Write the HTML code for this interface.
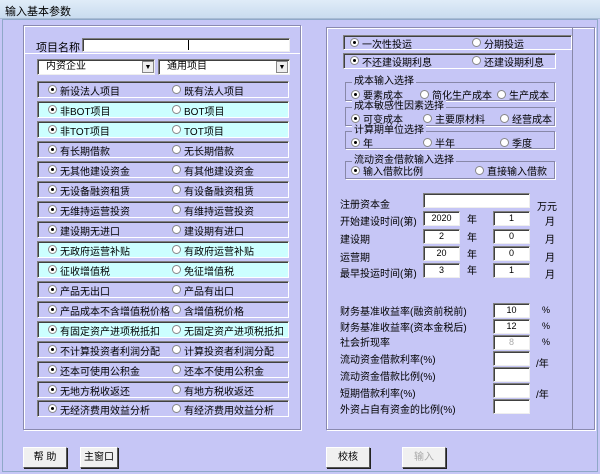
<!DOCTYPE html>
<html><head><meta charset="utf-8"><style>
*{margin:0;padding:0;box-sizing:border-box}
body{width:600px;height:474px;overflow:hidden;background:#c6c6f6;font-family:"Liberation Sans","Noto Sans CJK SC",sans-serif;font-size:10px;color:#000;position:relative}
.a{position:absolute;white-space:nowrap}
.title{left:0;top:0;width:600px;height:19px;background:linear-gradient(#e0ecf8,#c9dcef);border-bottom:1px solid #a8bcd4}
.frame{position:absolute;border:1px solid #8a8ab0;box-shadow:1px 1px 0 #fff inset,1px 1px 0 #fff}
.row{position:absolute;left:37px;width:252px;height:17px;border:1px solid #808080;border-right-color:#fff;border-bottom-color:#fff;box-shadow:inset 1px 1px 0 #404040}
.cy{background:#ccffff}
.r{position:absolute;top:3px;width:9px;height:9px;border-radius:50%;background:#fff;border:1px solid #888}
.r.on::after{content:"";position:absolute;left:2px;top:2px;width:3px;height:3px;border-radius:50%;background:#000}
.t{position:absolute;top:1px}
.in{position:absolute;background:#fff;border:1px solid #808080;border-right-color:#eee;border-bottom-color:#eee;box-shadow:inset 1px 1px 0 #404040;text-align:center;font-size:9px;line-height:13px}
.btn{position:absolute;height:21px;background:#f0f0f0;border:1px solid #fff;border-right-color:#555;border-bottom-color:#555;box-shadow:1px 1px 0 #222;text-align:center;line-height:19px}
.gb{position:absolute;border:1px solid #8888a8;box-shadow:1px 1px 0 #fff}
.gl{position:absolute;top:-8px;left:6px;background:#c6c6f6;padding:0 2px;line-height:13px}
</style></head><body>
<div class="a title"></div>
<div class="a" style="left:5px;top:3px;font-size:11px">输入基本参数</div>
<div class="a" style="left:2px;top:19px;width:596px;height:453px;border:1px solid #8fa8c8"></div>

<div class="frame" style="left:23px;top:25px;width:278px;height:405px"></div>
<div class="a" style="left:36px;top:39px;font-size:11px">项目名称</div>
<div class="in" style="left:82px;top:38px;width:208px;height:14px"></div>
<div class="a" style="left:188px;top:40px;width:1px;height:10px;background:#000"></div>
<div class="a" style="left:24px;top:53px;width:276px;height:1px;background:#fff"></div>
<div class="in" style="left:37px;top:59px;width:118px;height:16px;text-align:left;padding-left:8px;font-size:10px;line-height:14px">内资企业</div>
<div class="a" style="left:142px;top:61px;width:12px;height:12px;background:#eee;border:1px solid #888;font-size:7px;text-align:center;line-height:11px">▼</div>
<div class="in" style="left:158px;top:59px;width:132px;height:16px;text-align:left;padding-left:8px;font-size:10px;line-height:14px">通用项目</div>
<div class="a" style="left:276px;top:61px;width:12px;height:12px;background:#eee;border:1px solid #888;font-size:7px;text-align:center;line-height:11px">▼</div>

<div class="row" style="top:81px"><div class="r on" style="left:10px"></div><div class="t" style="left:22px">新设法人项目</div><div class="r" style="left:134px"></div><div class="t" style="left:146px">既有法人项目</div></div>
<div class="row cy" style="top:101px"><div class="r on" style="left:10px"></div><div class="t" style="left:22px">非BOT项目</div><div class="r" style="left:134px"></div><div class="t" style="left:146px">BOT项目</div></div>
<div class="row cy" style="top:121px"><div class="r on" style="left:10px"></div><div class="t" style="left:22px">非TOT项目</div><div class="r" style="left:134px"></div><div class="t" style="left:146px">TOT项目</div></div>
<div class="row" style="top:141px"><div class="r on" style="left:10px"></div><div class="t" style="left:22px">有长期借款</div><div class="r" style="left:134px"></div><div class="t" style="left:146px">无长期借款</div></div>
<div class="row" style="top:161px"><div class="r on" style="left:10px"></div><div class="t" style="left:22px">无其他建设资金</div><div class="r" style="left:134px"></div><div class="t" style="left:146px">有其他建设资金</div></div>
<div class="row" style="top:181px"><div class="r on" style="left:10px"></div><div class="t" style="left:22px">无设备融资租赁</div><div class="r" style="left:134px"></div><div class="t" style="left:146px">有设备融资租赁</div></div>
<div class="row" style="top:201px"><div class="r on" style="left:10px"></div><div class="t" style="left:22px">无维持运营投资</div><div class="r" style="left:134px"></div><div class="t" style="left:146px">有维持运营投资</div></div>
<div class="row" style="top:221px"><div class="r on" style="left:10px"></div><div class="t" style="left:22px">建设期无进口</div><div class="r" style="left:134px"></div><div class="t" style="left:146px">建设期有进口</div></div>
<div class="row cy" style="top:241px"><div class="r on" style="left:10px"></div><div class="t" style="left:22px">无政府运营补贴</div><div class="r" style="left:134px"></div><div class="t" style="left:146px">有政府运营补贴</div></div>
<div class="row cy" style="top:261px"><div class="r on" style="left:10px"></div><div class="t" style="left:22px">征收增值税</div><div class="r" style="left:134px"></div><div class="t" style="left:146px">免征增值税</div></div>
<div class="row" style="top:281px"><div class="r on" style="left:10px"></div><div class="t" style="left:22px">产品无出口</div><div class="r" style="left:134px"></div><div class="t" style="left:146px">产品有出口</div></div>
<div class="row" style="top:301px"><div class="r on" style="left:10px"></div><div class="t" style="left:22px">产品成本不含增值税价格</div><div class="r" style="left:134px"></div><div class="t" style="left:146px">含增值税价格</div></div>
<div class="row cy" style="top:321px"><div class="r on" style="left:10px"></div><div class="t" style="left:22px">有固定资产进项税抵扣</div><div class="r" style="left:134px"></div><div class="t" style="left:146px">无固定资产进项税抵扣</div></div>
<div class="row" style="top:341px"><div class="r on" style="left:10px"></div><div class="t" style="left:22px">不计算投资者利润分配</div><div class="r" style="left:134px"></div><div class="t" style="left:146px">计算投资者利润分配</div></div>
<div class="row" style="top:361px"><div class="r on" style="left:10px"></div><div class="t" style="left:22px">还本可使用公积金</div><div class="r" style="left:134px"></div><div class="t" style="left:146px">还本不使用公积金</div></div>
<div class="row" style="top:381px"><div class="r on" style="left:10px"></div><div class="t" style="left:22px">无地方税收返还</div><div class="r" style="left:134px"></div><div class="t" style="left:146px">有地方税收返还</div></div>
<div class="row" style="top:400px"><div class="r on" style="left:10px"></div><div class="t" style="left:22px">无经济费用效益分析</div><div class="r" style="left:134px"></div><div class="t" style="left:146px">有经济费用效益分析</div></div>

<div class="frame" style="left:326px;top:27px;width:269px;height:403px"></div>
<div class="a" style="left:572px;top:28px;width:1px;height:401px;background:#8888a8"></div>
<div class="row" style="left:343px;top:35px;width:229px;height:15px"><div class="r on" style="left:6px;top:2px"></div><div class="t" style="left:18px;top:0">一次性投运</div><div class="r" style="left:128px;top:2px"></div><div class="t" style="left:140px;top:0">分期投运</div></div>
<div class="row" style="left:343px;top:53px;width:213px;height:16px"><div class="r on" style="left:6px;top:2px"></div><div class="t" style="left:18px;top:0">不还建设期利息</div><div class="r" style="left:128px;top:2px"></div><div class="t" style="left:140px;top:0">还建设期利息</div></div>

<div class="gb" style="left:345px;top:82px;width:210px;height:19px"><div class="gl">成本输入选择</div></div>
<div class="a" style="left:351px;top:87px"><span class="r on" style="position:absolute;left:0;top:3px"></span><span style="position:absolute;left:12px">要素成本</span><span class="r" style="position:absolute;left:69px;top:3px"></span><span style="position:absolute;left:81px">简化生产成本</span><span class="r" style="position:absolute;left:146px;top:3px"></span><span style="position:absolute;left:158px">生产成本</span></div>
<div class="gb" style="left:345px;top:107px;width:210px;height:19px"><div class="gl">成本敏感性因素选择</div></div>
<div class="a" style="left:351px;top:111px"><span class="r on" style="position:absolute;left:0;top:3px"></span><span style="position:absolute;left:12px">可变成本</span><span class="r" style="position:absolute;left:72px;top:3px"></span><span style="position:absolute;left:84px">主要原材料</span><span class="r" style="position:absolute;left:149px;top:3px"></span><span style="position:absolute;left:161px">经营成本</span></div>
<div class="gb" style="left:345px;top:131px;width:210px;height:18px"><div class="gl">计算期单位选择</div></div>
<div class="a" style="left:351px;top:135px"><span class="r on" style="position:absolute;left:0;top:3px"></span><span style="position:absolute;left:12px">年</span><span class="r" style="position:absolute;left:72px;top:3px"></span><span style="position:absolute;left:84px">半年</span><span class="r" style="position:absolute;left:149px;top:3px"></span><span style="position:absolute;left:161px">季度</span></div>
<div class="gb" style="left:345px;top:161px;width:210px;height:18px"><div class="gl">流动资金借款输入选择</div></div>
<div class="a" style="left:351px;top:163px"><span class="r on" style="position:absolute;left:0;top:3px"></span><span style="position:absolute;left:12px">输入借款比例</span><span class="r" style="position:absolute;left:124px;top:3px"></span><span style="position:absolute;left:136px">直接输入借款</span></div>

<div class="a" style="left:340px;top:196px">注册资本金</div>
<div class="in" style="left:423px;top:193px;width:107px;height:15px"></div>
<div class="a" style="left:537px;top:198px">万元</div>

<div class="a" style="left:340px;top:213px">开始建设时间(第)</div>
<div class="in" style="left:423px;top:211px;width:37px;height:15px">2020</div><div class="a" style="left:467px;top:211px">年</div>
<div class="in" style="left:493px;top:211px;width:37px;height:15px">1</div><div class="a" style="left:545px;top:213px">月</div>
<div class="a" style="left:340px;top:231px">建设期</div>
<div class="in" style="left:423px;top:229px;width:37px;height:15px">2</div><div class="a" style="left:467px;top:229px">年</div>
<div class="in" style="left:493px;top:229px;width:37px;height:15px">0</div><div class="a" style="left:545px;top:231px">月</div>
<div class="a" style="left:340px;top:249px">运营期</div>
<div class="in" style="left:423px;top:246px;width:37px;height:15px">20</div><div class="a" style="left:467px;top:246px">年</div>
<div class="in cy" style="left:493px;top:246px;width:37px;height:15px">0</div><div class="a" style="left:545px;top:249px">月</div>
<div class="a" style="left:340px;top:265px">最早投运时间(第)</div>
<div class="in cy" style="left:423px;top:263px;width:37px;height:15px">3</div><div class="a" style="left:467px;top:262px">年</div>
<div class="in cy" style="left:493px;top:263px;width:37px;height:15px">1</div><div class="a" style="left:545px;top:266px">月</div>

<div class="a" style="left:340px;top:303px">财务基准收益率(融资前税前)</div>
<div class="in" style="left:493px;top:303px;width:37px;height:15px">10</div><div class="a" style="left:542px;top:305px;font-size:9px">%</div>
<div class="a" style="left:340px;top:319px">财务基准收益率(资本金税后)</div>
<div class="in" style="left:493px;top:319px;width:37px;height:15px">12</div><div class="a" style="left:542px;top:321px;font-size:9px">%</div>
<div class="a" style="left:340px;top:334px">社会折现率</div>
<div class="in cy" style="left:493px;top:335px;width:37px;height:15px;color:#aaa">8</div><div class="a" style="left:542px;top:337px;font-size:9px">%</div>
<div class="a" style="left:340px;top:351px">流动资金借款利率(%)</div>
<div class="in" style="left:493px;top:351px;width:37px;height:15px"></div><div class="a" style="left:536px;top:355px">/年</div>
<div class="a" style="left:340px;top:368px">流动资金借款比例(%)</div>
<div class="in" style="left:493px;top:367px;width:37px;height:15px"></div>
<div class="a" style="left:340px;top:385px">短期借款利率(%)</div>
<div class="in" style="left:493px;top:383px;width:37px;height:15px"></div><div class="a" style="left:536px;top:386px">/年</div>
<div class="a" style="left:340px;top:401px">外资占自有资金的比例(%)</div>
<div class="in cy" style="left:493px;top:399px;width:37px;height:15px"></div>

<div class="btn" style="left:23px;top:447px;width:44px">帮 助</div>
<div class="btn" style="left:80px;top:447px;width:38px">主窗口</div>
<div class="btn" style="left:326px;top:447px;width:44px">校核</div>
<div class="btn" style="left:402px;top:447px;width:44px;color:#aaa">输入</div>
</body></html>
